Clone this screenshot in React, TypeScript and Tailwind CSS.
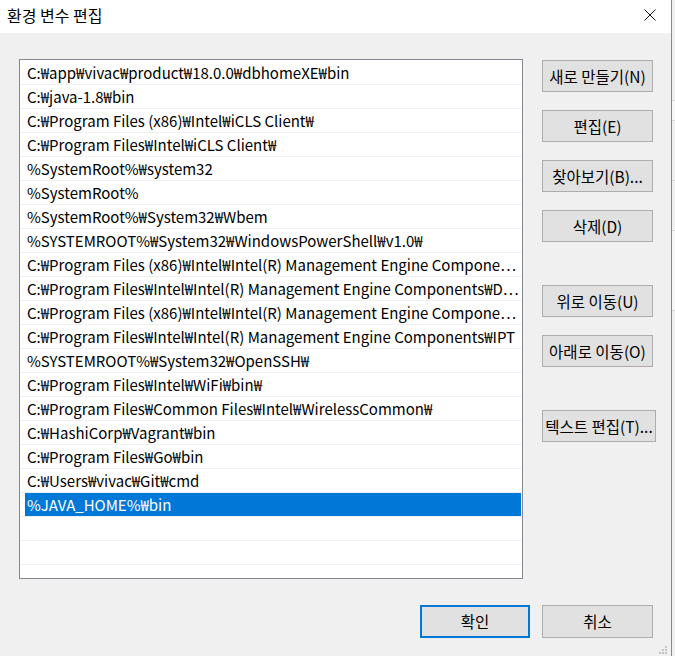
import React from 'react';

const rows = [
  'C:₩app₩vivac₩product₩18.0.0₩dbhomeXE₩bin',
  'C:₩java-1.8₩bin',
  'C:₩Program Files (x86)₩Intel₩iCLS Client₩',
  'C:₩Program Files₩Intel₩iCLS Client₩',
  '%SystemRoot%₩system32',
  '%SystemRoot%',
  '%SystemRoot%₩System32₩Wbem',
  '%SYSTEMROOT%₩System32₩WindowsPowerShell₩v1.0₩',
  'C:₩Program Files (x86)₩Intel₩Intel(R) Management Engine Compone…',
  'C:₩Program Files₩Intel₩Intel(R) Management Engine Components₩D…',
  'C:₩Program Files (x86)₩Intel₩Intel(R) Management Engine Compone…',
  'C:₩Program Files₩Intel₩Intel(R) Management Engine Components₩IPT',
  '%SYSTEMROOT%₩System32₩OpenSSH₩',
  'C:₩Program Files₩Intel₩WiFi₩bin₩',
  'C:₩Program Files₩Common Files₩Intel₩WirelessCommon₩',
  'C:₩HashiCorp₩Vagrant₩bin',
  'C:₩Program Files₩Go₩bin',
  'C:₩Users₩vivac₩Git₩cmd',
  '%JAVA_HOME%₩bin',
  '',
  '',
];

const font = { fontFamily: '"Noto Sans CJK KR", "Noto Sans", sans-serif' };

function Btn({ label, className = '' }: { label: string; className?: string }) {
  return (
    <div
      className={`h-[32px] flex items-center justify-center pt-[1px] bg-[#e1e1e1] border border-[#adadad] text-[15.5px] text-black ${className}`}
    >
      {label}
    </div>
  );
}

export default function App() {
  return (
    <div className="w-[675px] h-[656px] flex overflow-hidden" style={font}>
      <div className="w-[671px] h-full flex flex-col">
        {/* title bar */}
        <div className="h-[33px] bg-white flex items-center justify-between pl-[7px] pr-[15px] pb-[3px]">
          <span className="text-[16px] text-black leading-none">환경 변수 편집</span>
          <svg width="12" height="12" viewBox="0 0 12 12">
            <path d="M0.5 0.5 L11.5 11.5 M11.5 0.5 L0.5 11.5" stroke="#111" strokeWidth="1" />
          </svg>
        </div>

        {/* body */}
        <div className="flex-1 bg-[#f0f0f0] relative">
          <div className="flex pt-[26px] pl-[19px] gap-[19px]">
            <div className="w-[504px] h-[520px] bg-white border border-[#828790] pt-[1px] overflow-hidden">
              {rows.map((r, i) => (
                <div key={i} className="h-[24px] border-b border-[#f0f0f0] flex">
                  <div
                    className={`ml-[5px] mr-[1px] flex-1 pl-[2px] pt-[2px] flex items-center whitespace-nowrap overflow-hidden text-[15px] ${
                      i === 18 ? 'bg-[#0078d7] text-white' : 'text-black'
                    }`}
                  >
                    {r}
                  </div>
                </div>
              ))}
            </div>

            <div className="flex flex-col pt-[1px]">
              <Btn label="새로 만들기(N)" className="w-[111px]" />
              <Btn label="편집(E)" className="w-[111px] mt-[18px]" />
              <Btn label="찾아보기(B)..." className="w-[111px] mt-[18px]" />
              <Btn label="삭제(D)" className="w-[111px] mt-[18px]" />
              <Btn label="위로 이동(U)" className="w-[111px] mt-[43px]" />
              <Btn label="아래로 이동(O)" className="w-[111px] mt-[18px]" />
              <Btn label="텍스트 편집(T)..." className="w-[114px] mt-[43px]" />
            </div>
          </div>

          <div className="flex justify-end gap-[12px] pr-[18px] mt-[26px]">
            <div className="w-[110px] h-[33px] flex items-center justify-center pt-[1px] bg-[#e1e1e1] border-2 border-[#0078d7] text-[15.5px] text-black">
              확인
            </div>
            <div className="w-[111px] h-[33px] flex items-center justify-center pt-[1px] bg-[#e1e1e1] border border-[#adadad] text-[15.5px] text-black">
              취소
            </div>
          </div>

          {/* size grip */}
          <svg className="absolute right-[3px] bottom-[1px]" width="10" height="10" viewBox="0 0 10 10">
            <rect x="7" y="1" width="2" height="2" fill="#c4c4c4" />
            <rect x="4" y="4" width="2" height="2" fill="#c4c4c4" />
            <rect x="7" y="4" width="2" height="2" fill="#c4c4c4" />
            <rect x="1" y="7" width="2" height="2" fill="#c4c4c4" />
            <rect x="4" y="7" width="2" height="2" fill="#c4c4c4" />
            <rect x="7" y="7" width="2" height="2" fill="#c4c4c4" />
          </svg>
        </div>
      </div>

      {/* window behind */}
      <div className="w-[4px] h-full border-l border-[#8a8a8a] bg-[#f0f0f0] flex flex-col">
        <div className="h-[100px]" />
        <div className="h-[20px] border-t border-[#d8d8d8] bg-[#f7f7f7]" />
        <div className="h-[60px] border-t border-[#d8d8d8]" />
        <div className="h-[50px] border-t border-[#d8d8d8]" />
        <div className="h-[80px] border-t border-[#d8d8d8] bg-[#f7f7f7]" />
        <div className="flex-1 border-t border-[#d8d8d8]" />
      </div>
    </div>
  );
}
